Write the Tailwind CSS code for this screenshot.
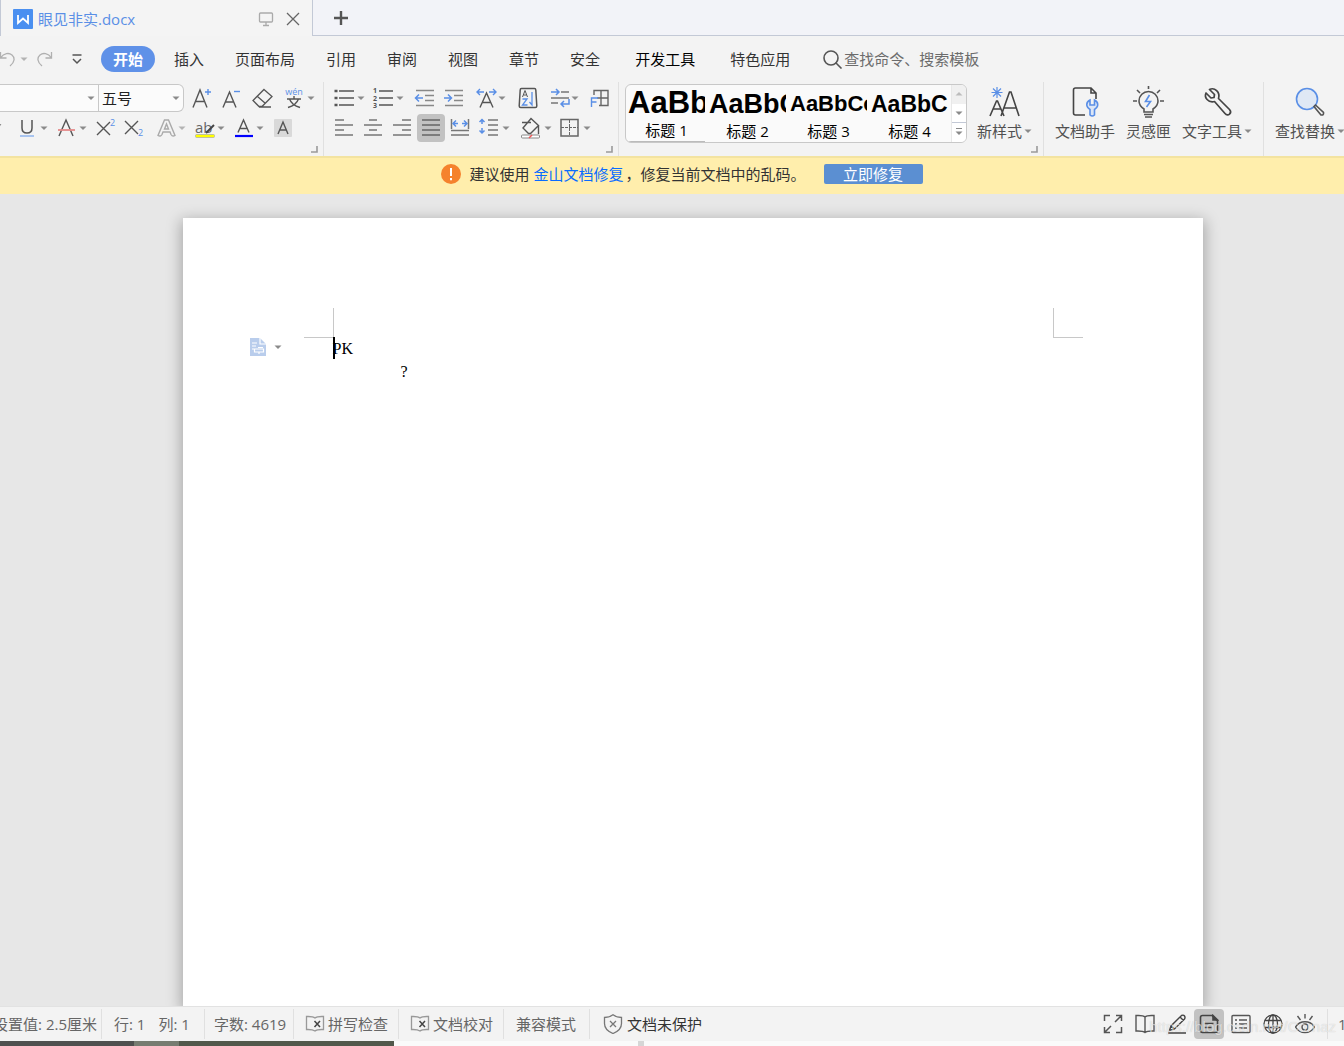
<!DOCTYPE html>
<html lang="zh-CN">
<head>
  <meta charset="UTF-8" />
  <meta name="viewport" content="width=device-width, initial-scale=1.0"/>
  <title>眼见非实.docx</title>
  <script src="https://cdn.jsdelivr.net/npm/@tailwindcss/browser@4"></script>
</head>
<body class="h-screen flex flex-col overflow-hidden bg-[#f3f3f3] font-['Open_Sans','Noto_Sans_CJK_SC',sans-serif] text-[15px] leading-5 text-[#505050]">

  <!-- Shared shapes -->
  <svg class="hidden">
    <symbol id="caret" viewBox="0 0 8 8"><path d="M.5 2.500h7L4 6z" fill="#8a8a8a"/></symbol>
    <symbol id="launcher" viewBox="0 0 8 8"><path d="M7 1v6H1" fill="none" stroke="#9a9a9a" stroke-width="1.6"/></symbol>
    <symbol id="bookx" viewBox="0 0 20 18"><path d="M10 3C8 1.200 5 1.500 1.500 1.500v13c3 0 6-.300 8.500 1.500 2-1.800 5-1.500 8.500-1.500v-13C15 1.500 12 1.200 10 3z" fill="none" stroke="#999" stroke-width="1.300"/><path d="M9.500 6l5.500 6M15 6l-5.500 6" stroke="#444" stroke-width="1.500"/></symbol>
  </svg>

  <!-- Tabs -->
  <div class="flex h-9 shrink-0 bg-[#f2f3f8]">
    <div class="flex w-[313px] items-center border-x border-[#c3c9d6] bg-[#f4f4f4] pl-3 pr-[11px] pt-0.5">
      <svg class="h-5 w-5" viewBox="0 0 20 20"><rect width="20" height="20" rx="1" fill="#4a8ff0"/><path d="M5 6v8l5-4.500 5 4.500V6" fill="none" stroke="#fff" stroke-width="1.800"/></svg>
      <span class="ml-[5px] flex-1 text-[#5a8fe6]">眼见非实.docx</span>
      <svg class="h-4 w-4" viewBox="0 0 16 16" fill="none" stroke="#aaa" stroke-width="1.300"><rect x="1.500" y="2" width="13" height="9" rx="1"/><path d="M8 11v3M5 14.500h6"/></svg>
      <button class="ml-[11px]" aria-label="关闭"><svg class="h-4 w-4" viewBox="0 0 16 16" stroke="#666" stroke-width="1.300"><path d="M2 2l12 12M14 2L2 14"/></svg></button>
    </div>
    <div class="flex flex-1 items-center border-b border-[#c3c9d6] pl-5">
      <button aria-label="新建"><svg class="h-4 w-4" viewBox="0 0 16 16" stroke="#555" stroke-width="2.400"><path d="M8 1v14M1 8h14"/></svg></button>
    </div>
  </div>

  <!-- Menu -->
  <nav class="flex h-[46px] shrink-0 items-center whitespace-nowrap">
    <div class="flex w-[101px] items-center">
      <button class="-ml-px" aria-label="撤销"><svg class="h-4 w-4" viewBox="0 0 16 16" fill="none" stroke="#b0b0b0" stroke-width="1.300"><path d="M1.500 1v6h6M1.500 7C5 2 10 1.500 13 4c3 2.600 3 7-2 11"/></svg></button>
      <svg class="ml-[5px] h-2 w-2 opacity-60"><use href="#caret"/></svg>
      <button class="ml-[9px]" aria-label="恢复"><svg class="h-4 w-4" viewBox="0 0 16 16" fill="none" stroke="#b0b0b0" stroke-width="1.300"><path d="M14.500 1v6h-6M14.500 7C11 2 6 1.500 3 4c-3 2.600-3 7 2 11"/></svg></button>
      <button class="ml-[18px]" aria-label="更多"><svg class="h-3 w-3" viewBox="0 0 12 12" fill="none" stroke="#555" stroke-width="1.500"><path d="M1.500 2h9M2 6l4 4 4-4"/></svg></button>
    </div>
    <div class="flex items-center gap-[31px] text-[#333]">
      <button class="-mr-3 h-[26px] rounded-full bg-[#5f91e8] px-3 font-bold text-white">开始</button>
      <button>插入</button>
      <button>页面布局</button>
      <button>引用</button>
      <button>审阅</button>
      <button>视图</button>
      <button>章节</button>
      <button>安全</button>
      <button class="ml-1 text-black">开发工具</button>
      <button class="ml-1">特色应用</button>
    </div>
    <label class="ml-[33px] flex flex-1 items-center">
      <svg class="h-5 w-5 shrink-0" viewBox="0 0 20 20" fill="none" stroke="#555" stroke-width="1.600"><circle cx="8" cy="9" r="7"/><path d="M12.500 13.500l6 6"/></svg>
      <input type="text" aria-label="搜索" placeholder="查找命令、搜索模板" class="ml-px w-40 outline-none placeholder:text-[#6c6c6c]"/>
    </label>
  </nav>

  <!-- Ribbon -->
  <div class="flex h-[74px] shrink-0 whitespace-nowrap">

    <!-- Font -->
    <div class="relative flex w-[324px] shrink-0 flex-col gap-0.5 border-r border-[#e0e0e0] pt-0.5">
      <div class="flex h-7 items-center gap-[7px]">
        <div class="-mr-px flex h-7 w-[184px] rounded-r-md border border-l-0 border-[#c8c8c8] bg-[#fbfbfb]">
          <div class="flex w-[99px] items-center border-r border-[#c8c8c8] pr-[3px]">
            <input type="text" aria-label="字体" class="min-w-0 flex-1 outline-none"/>
            <svg class="h-2 w-2"><use href="#caret"/></svg>
          </div>
          <div class="relative flex flex-1 items-center">
            <select aria-label="字号" class="w-full appearance-none pl-[3px] text-[#222] outline-none"><option>五号</option></select>
            <svg class="pointer-events-none absolute right-[3px] h-2 w-2"><use href="#caret"/></svg>
          </div>
        </div>
        <button aria-label="增大字号"><svg class="h-6 w-6" viewBox="0 0 24 24" fill="none" stroke="#555" stroke-width="1.400"><path d="M3 21.500L10 4l7 17.500M5.500 15.500h9"/><path d="M18 3v6M15 6h6" stroke="#5a8fe6"/></svg></button>
        <button aria-label="减小字号"><svg class="h-6 w-6" viewBox="0 0 24 24" fill="none" stroke="#555" stroke-width="1.400"><path d="M2 21.500L8.500 6 15 21.500M4.500 16h8"/><path d="M13 5.500h6" stroke="#5a8fe6"/></svg></button>
        <button aria-label="清除格式"><svg class="h-6 w-6" viewBox="0 0 24 24" fill="none" stroke="#555" stroke-width="1.300"><path d="M12 3.500l8 7L10 20.500H7l-6-6zM5.500 10.500l8 7M7 21h12"/></svg></button>
        <button class="flex items-center" aria-label="拼音指南"><svg class="h-6 w-6" viewBox="0 0 24 24" fill="none" stroke="#555" stroke-width="1.400"><text x="11" y="9" text-anchor="middle" font-size="9" fill="#5a8fe6" stroke="none">wén</text><path d="M4 13h14M11 10v3M6.500 13c1.500 4 5 7 10.500 8.500M15.500 13c-1.500 4-5 7-10.500 8.500"/></svg><svg class="h-2 w-2"><use href="#caret"/></svg></button>
      </div>
      <div class="flex h-7 items-center gap-1.5">
        <svg class="-mr-1.5 h-2 w-[15px]" viewBox="0 0 15 8"><path d="M-3 -1h5l-2.500 4z" fill="#8a8a8a"/></svg>
        <button class="flex items-center gap-px" aria-label="下划线"><svg class="h-6 w-6" viewBox="0 0 24 24" fill="none" stroke="#555" stroke-width="1.500"><path d="M7 4v8c0 3 1.500 5 5 5s5-2 5-5V4"/><path d="M5 20h14" stroke="#8fb4ee"/></svg><svg class="h-2 w-2"><use href="#caret"/></svg></button>
        <button class="flex items-center gap-px" aria-label="删除线"><svg class="h-6 w-6" viewBox="0 0 24 24" fill="none" stroke="#555" stroke-width="1.400"><path d="M5 20l7-16 7 16"/><path d="M4 14h17" stroke="#e58a8a" stroke-width="1.800"/></svg><svg class="h-2 w-2"><use href="#caret"/></svg></button>
        <button aria-label="上标"><svg class="h-6 w-6" viewBox="0 0 24 24" stroke="#555" stroke-width="1.400"><path d="M4 6l13 13M17 6L4 19"/><text x="17" y="10" font-size="9" fill="#5a8fe6" stroke="none">2</text></svg></button>
        <button aria-label="下标"><svg class="h-6 w-6" viewBox="0 0 24 24" stroke="#555" stroke-width="1.400"><path d="M2 5l13 13M15 5L2 18"/><text x="15" y="20" font-size="9" fill="#5a8fe6" stroke="none">2</text></svg></button>
        <button class="flex items-center gap-px" aria-label="文字效果"><svg class="h-6 w-6" viewBox="0 0 24 24" fill="none" stroke="#aaa" stroke-width="1.400"><path d="M11.500 4h4L22 19.500q-2.500 1.500-4-1l-1-2.500h-7l-1 2.500q-1.500 2.500-4 1zM11.500 13h4l-2-5z"/></svg><svg class="h-2 w-2 opacity-60"><use href="#caret"/></svg></button>
        <button class="flex items-center gap-px" aria-label="突出显示"><svg class="h-6 w-6" viewBox="0 0 24 24"><text x="3" y="17" font-size="15" fill="#666">ab</text><path d="M14 17l8-8" stroke="#444" stroke-width="2"/><rect x="3.500" y="18.500" width="19" height="3" rx="1" fill="#ff0" stroke="#aaa" stroke-width=".7"/></svg><svg class="h-2 w-2"><use href="#caret"/></svg></button>
        <button class="flex items-center gap-px" aria-label="字体颜色"><svg class="h-6 w-6" viewBox="0 0 24 24" fill="none" stroke="#555" stroke-width="1.400"><path d="M7 16.500L12.500 4 18 16.500M9 12.500h7"/><path d="M4 20h18" stroke="#00f" stroke-width="2.200"/></svg><svg class="h-2 w-2"><use href="#caret"/></svg></button>
        <button aria-label="字符底纹"><svg class="h-6 w-6" viewBox="0 0 24 24" fill="none" stroke="#555" stroke-width="1.400"><rect x="4" y="3" width="18" height="18" rx="1" fill="#d9d9d9" stroke="none"/><path d="M8 18l5-12 5 12M10 14h6"/></svg></button>
      </div>
      <svg class="absolute bottom-[3px] right-[5px] h-2 w-2"><use href="#launcher"/></svg>
    </div>

    <!-- Paragraph -->
    <div class="relative flex w-[295px] shrink-0 flex-col gap-0.5 border-r border-[#e0e0e0] pt-0.5">
      <div class="flex h-7 items-center gap-2 pl-2">
        <div class="flex gap-1.5">
          <button class="flex items-center gap-px" aria-label="项目符号"><svg class="h-6 w-6" viewBox="0 0 24 24" stroke="#555" stroke-width="1.500"><path d="M7 5h15M7 12h15M7 19h15"/><path d="M2.500 5h3M2.500 12h3M2.500 19h3" stroke-width="2.500"/></svg><svg class="h-2 w-2"><use href="#caret"/></svg></button>
          <button class="flex items-center gap-px" aria-label="编号"><svg class="h-6 w-6" viewBox="0 0 24 24" stroke="#555" stroke-width="1.500"><path d="M8 5h14M8 12h14M8 19h14"/><g font-size="7" font-weight="700" fill="#555" stroke="none"><text x="2" y="7">1</text><text x="2" y="14.500">2</text><text x="2" y="22">3</text></g></svg><svg class="h-2 w-2"><use href="#caret"/></svg></button>
        </div>
        <div class="flex gap-[5px]">
          <button aria-label="减少缩进"><svg class="h-6 w-6" viewBox="0 0 24 24" fill="none" stroke="#888" stroke-width="1.500"><path d="M4 4.500h18M13 9.500h9M13 14.500h9M4 19.500h18"/><path d="M11 12H4M7 8.500L3.500 12 7 15.500" stroke="#5a8fe6"/></svg></button>
          <button aria-label="增加缩进"><svg class="h-6 w-6" viewBox="0 0 24 24" fill="none" stroke="#888" stroke-width="1.500"><path d="M4 4.500h18M13 9.500h9M13 14.500h9M4 19.500h18"/><path d="M3 12h7M7 8.500l3.500 3.500L7 15.500" stroke="#5a8fe6"/></svg></button>
        </div>
        <button class="flex items-center gap-px" aria-label="字符缩放"><svg class="h-6 w-6" viewBox="0 0 24 24" fill="none" stroke="#555" stroke-width="1.400"><path d="M7 21.500L13.500 7 20 21.500M9.500 16.500h8"/><path d="M11 6H4M7 3L4 6l3 3M16 6h7M20 3l3 3-3 3" stroke="#5a8fe6"/></svg><svg class="h-2 w-2"><use href="#caret"/></svg></button>
        <button aria-label="排序"><svg class="h-6 w-6" viewBox="0 0 24 24" fill="none" stroke="#555" stroke-width="1.500"><path d="M7.500 2.500h13q1.200 0 1.300 1.500l1 16q0 1.500-1.500 1.500H6.700q-1.500 0-1.500-1.500l1-16q0-1.500 1.300-1.500z"/><path d="M8.500 11L11 4.500 13.500 11M9.500 9h3" stroke-width="1"/><path d="M8.500 13H13l-4.500 6h5M18 6v13l-2.500-3" stroke="#5a8fe6" stroke-width="1.300"/></svg></button>
        <button class="flex items-center gap-px" aria-label="换行"><svg class="h-6 w-6" viewBox="0 0 24 24" fill="none" stroke="#777" stroke-width="1.500"><path d="M15 6h8M5 12h18M5 17h7"/><path d="M5 6h8M10 3l3 3-3 3M23 13v5h-8M18 15l-3 3 3 3" stroke="#5a8fe6"/></svg><svg class="h-2 w-2"><use href="#caret"/></svg></button>
        <button aria-label="制表位"><svg class="h-6 w-6" viewBox="0 0 24 24" fill="none" stroke="#666" stroke-width="1.400"><path d="M7 9V4.500h14v15h-9M14 4.500v15M10 12h11"/><path d="M4.500 21v-9H11M4.500 16h5" stroke="#5a8fe6"/></svg></button>
      </div>
      <div class="flex h-7 items-center gap-[9px] pl-1.5">
        <div class="flex gap-px">
          <button class="flex h-7 w-7 items-center justify-center" aria-label="左对齐"><svg class="h-6 w-6" viewBox="0 0 24 24" stroke="#777" stroke-width="1.500"><path d="M3 4h9M3 9h18M3 14h9M3 19h18"/></svg></button>
          <button class="flex h-7 w-7 items-center justify-center" aria-label="居中"><svg class="h-6 w-6" viewBox="0 0 24 24" stroke="#777" stroke-width="1.500"><path d="M8 4h8M3 9h18M8 14h8M3 19h18"/></svg></button>
          <button class="flex h-7 w-7 items-center justify-center" aria-label="右对齐"><svg class="h-6 w-6" viewBox="0 0 24 24" stroke="#777" stroke-width="1.500"><path d="M12 4h9M3 9h18M12 14h9M3 19h18"/></svg></button>
          <button class="flex h-7 w-7 items-center justify-center rounded bg-[#c2c2c2]" aria-label="两端对齐"><svg class="h-6 w-6" viewBox="0 0 24 24" stroke="#666" stroke-width="1.500"><path d="M3 4h18M3 9h18M3 14h18M3 19h18"/></svg></button>
          <button class="flex h-7 w-7 items-center justify-center" aria-label="分散对齐"><svg class="h-6 w-6" viewBox="0 0 24 24" fill="none" stroke="#777" stroke-width="1.500"><path d="M3.500 3v10M20.500 3v10M3 14.500h18M3 19h18"/><path d="M10 7.500H5M8 4.500l-3 3 3 3M14 7.500h5M16 4.500l3 3-3 3" stroke="#5a8fe6"/></svg></button>
        </div>
        <button class="-ml-1.5 flex items-center gap-px" aria-label="行距"><svg class="h-6 w-6" viewBox="0 0 24 24" fill="none" stroke="#777" stroke-width="1.500"><path d="M11 4h10M11 9h10M11 14h10M11 19h10"/><path d="M5 8V3.500M2.500 6L5 3.500 7.500 6M5 12v5M2.500 14.500L5 17l2.500-2.500" stroke="#5a8fe6"/></svg><svg class="h-2 w-2"><use href="#caret"/></svg></button>
        <div class="flex gap-1.5">
          <button class="flex items-center gap-px" aria-label="底纹颜色"><svg class="h-6 w-6" viewBox="0 0 24 24" fill="none" stroke="#555" stroke-width="1.400"><path d="M12 2.500l7.500 7-8 8h-2l-5.500-5.500zM3 6.500h9M19.500 9v9"/><rect x="2.500" y="19" width="18" height="3" rx="1" fill="#fff" stroke="#888" stroke-width="1"/><path d="M10 22l3-3" stroke="#e55"/></svg><svg class="h-2 w-2"><use href="#caret"/></svg></button>
          <button class="flex items-center gap-px" aria-label="边框"><svg class="h-6 w-6" viewBox="0 0 24 24" fill="none" stroke="#666" stroke-width="1.500"><rect x="3" y="3.500" width="17" height="16.500"/><path d="M11.500 4v16M3 11.500h17" stroke-width="1" stroke-dasharray="3 1"/></svg><svg class="h-2 w-2"><use href="#caret"/></svg></button>
        </div>
      </div>
      <svg class="absolute bottom-[3px] right-[5px] h-2 w-2"><use href="#launcher"/></svg>
    </div>

    <!-- Styles -->
    <div class="relative flex w-[425px] shrink-0 border-r border-[#e0e0e0] pl-1.5 pt-0.5">
      <div class="flex h-[59px] w-[342px] overflow-hidden rounded-md border border-[#c8c8c8] bg-[#fafafa] text-black">
        <div class="flex flex-1 gap-1 pl-0.5">
          <button class="w-[77px] overflow-hidden border-b border-[#bbb] text-left"><span class="flex h-[34px] items-center font-['Liberation_Sans'] text-[31px] font-bold">AaBb</span><span class="block text-center">标题 1</span></button>
          <button class="w-[77px] overflow-hidden text-left"><span class="flex h-[34px] items-center font-['Liberation_Sans'] text-[27px] font-bold">AaBbC</span><span class="block text-center">标题 2</span></button>
          <button class="w-[77px] overflow-hidden text-left"><span class="flex h-[34px] items-center font-['Liberation_Sans'] text-[22px] font-bold">AaBbCc</span><span class="block text-center">标题 3</span></button>
          <button class="w-[77px] overflow-hidden text-left"><span class="flex h-[34px] items-center font-['Liberation_Sans'] text-[23px] font-bold">AaBbC</span><span class="block text-center">标题 4</span></button>
        </div>
        <div class="flex w-[15px] flex-col border-l border-[#e8e8e8]">
          <button class="flex flex-1 items-center justify-center bg-[#f0f0f0]" aria-label="上一行"><svg class="h-2 w-2 rotate-180 opacity-50"><use href="#caret"/></svg></button>
          <button class="flex flex-1 items-center justify-center bg-white" aria-label="下一行"><svg class="h-2 w-2"><use href="#caret"/></svg></button>
          <button class="flex flex-1 flex-col items-center justify-center border-t border-[#c3c9d6] bg-white" aria-label="全部样式"><span class="h-px w-1.5 bg-[#888]"></span><svg class="h-2 w-2"><use href="#caret"/></svg></button>
        </div>
      </div>
      <button class="ml-2.5 flex flex-col items-center">
        <svg class="mt-0.5 h-8 w-8" viewBox="0 0 32 32" fill="none" stroke="#444" stroke-width="1.600"><path d="M1 30l6.500-15h1L15 30M3.500 23h9M12 30l8.500-24h1.500L30 30M14.500 22h13"/><path d="M8 1v11M2.500 6.500h11M4 2.500l8 8M12 2.500l-8 8" stroke="#5a8fe6" stroke-width="1.200"/></svg>
        <span class="mt-[3px] flex items-center gap-0.5">新样式 <svg class="h-2 w-2"><use href="#caret"/></svg></span>
      </button>
      <svg class="absolute bottom-[3px] right-[5px] h-2 w-2"><use href="#launcher"/></svg>
    </div>

    <!-- Tools -->
    <div class="flex w-[220px] shrink-0 gap-[11px] border-r border-[#e0e0e0] pl-[11px] pt-0.5">
      <button class="flex flex-col items-center">
        <svg class="mt-0.5 h-8 w-8" viewBox="0 0 32 32" fill="none" stroke="#444" stroke-width="1.600"><path d="M16 29H6.500Q4.500 29 4.500 27V4q0-2 2-2H22l5 5v6M22 2v5h5"/><path d="M21 14v5h4.500v-5q4 2 3 6-.5 2-3 3.500V29q-2.300 2-4.500 0v-5.500q-2.500-1.500-3-3.500-1-4 3-6z" fill="#dce6f6" stroke="#5a8fe6"/></svg>
        <span class="mt-[3px]">文档助手</span>
      </button>
      <button class="flex flex-col items-center">
        <svg class="mt-0.5 h-8 w-8" viewBox="0 0 32 32" fill="none" stroke="#555" stroke-width="1.600"><path d="M11 26v-3c-3-2-5-4.500-5-8a9.500 9.500 0 0 1 19 0c0 3.500-2 6-5 8v3zM11 28.500h9M12 31h7M15.500 0v3M0 15h4M27 15h4M4 4l3 3M27 4l-3 3"/><path d="M16.500 9l-4 6.500h5L13.500 21" stroke="#5a8fe6"/></svg>
        <span class="mt-[3px]">灵感匣</span>
      </button>
      <button class="flex flex-col items-center">
        <svg class="mt-0.5 h-8 w-8" viewBox="0 0 32 32" fill="none" stroke="#444" stroke-width="1.700" stroke-linejoin="round"><path d="M8.500 3.500l5 5-.5 3-3 .5-5-5c-2 4.500 2 10 8.500 8.500l10.500 12c3 3.500 7.500-.5 4.500-4L17.500 12.500C19.500 6 13.500 1 8.500 3.500z"/></svg>
        <span class="mt-[3px] flex items-center gap-0.5">文字工具 <svg class="h-2 w-2"><use href="#caret"/></svg></span>
      </button>
    </div>

    <!-- Find -->
    <div class="flex min-w-0 flex-1 pl-[11px] pt-0.5">
      <button class="flex shrink-0 flex-col items-center">
        <svg class="mt-0.5 h-8 w-8" viewBox="0 0 32 32" fill="none" stroke-width="1.600"><circle cx="13" cy="13" r="10.500" fill="#dfe8f5" stroke="#5a8fe6"/><path d="M20 20.500l1.500-1.500 8 7.500q.5 3-2.500 2.500z" stroke="#555"/></svg>
        <span class="mt-[3px] flex items-center gap-0.5">查找替换 <svg class="h-2 w-2"><use href="#caret"/></svg></span>
      </button>
    </div>
  </div>

  <!-- Repair notice -->
  <div class="flex h-[38px] shrink-0 items-center justify-center border-t-2 border-[#f3e3a0] bg-[#ffeeac] pb-1 pl-5 text-[#333]">
    <svg class="h-5 w-5" viewBox="0 0 20 20"><circle cx="10" cy="10" r="10" fill="#f5822d"/><path d="M10 4v8M10 14v2.200" stroke="#fff" stroke-width="2"/></svg>
    <span class="ml-2">建议使用</span>
    <a href="#" class="ml-1 text-[#0a6cff]">金山文档修复</a>
    <span class="ml-0.5">，修复当前文档中的乱码。</span>
    <button class="ml-[18px] h-5 w-[99px] rounded-xs bg-[#5b8fd2] text-white">立即修复</button>
  </div>

  <!-- Document -->
  <main class="flex min-h-0 flex-1 justify-center overflow-hidden bg-[#e7e7e7] pl-[41px] pt-6">
    <div class="relative h-full w-[1020px] bg-white pl-[150px] pt-[119px] font-['Liberation_Serif',serif] text-base text-black shadow-[0_4px_14px_2px_rgba(0,0,0,0.28)]">
      <div class="absolute left-[121px] top-[90px] h-[30px] w-[30px] border-b border-r border-[#c8c8c8]"></div>
      <div class="absolute right-[120px] top-[90px] h-[30px] w-[30px] border-b border-l border-[#c8c8c8]"></div>
      <button class="absolute left-[67px] top-[120px] flex items-center gap-2" aria-label="段落布局">
        <svg class="h-[18px] w-4" viewBox="0 0 16 18"><path d="M0 0h10l6 6v12H0z" fill="#b9cdec"/><path d="M10 0v6h6M2 5h5M2 8h4M2 11h3M4.500 11h9v3h-9zM8 9.500h5M9 14v2" fill="none" stroke="#fff" stroke-width="1.200"/></svg>
        <svg class="h-2 w-2"><use href="#caret"/></svg>
      </button>
      <p class="relative leading-[23px]"><span class="absolute left-0 top-0 h-[22px] w-0.5 bg-black"></span>PK</p>
      <p class="pl-[68px] leading-[23px]">?</p>
    </div>
  </main>

  <!-- Status bar -->
  <footer class="relative flex h-[35px] shrink-0 items-center whitespace-nowrap border-t border-[#e2e2e2] text-[#666]">
    <div class="flex h-[30px] w-[102px] items-center justify-end overflow-hidden border-r border-[#e0e0e0] pr-1"><span>设置值: 2.5厘米</span></div>
    <div class="flex h-[30px] w-[103px] items-center gap-[13px] border-r border-[#e0e0e0] pl-3"><span>行: 1</span><span>列: 1</span></div>
    <div class="flex h-[30px] w-[89px] items-center border-r border-[#e0e0e0] pl-[9px]">字数: 4619</div>
    <button class="flex h-[30px] w-[105px] items-center gap-[3px] border-r border-[#e0e0e0] pl-[11px]"><svg class="h-[18px] w-5"><use href="#bookx"/></svg>拼写检查</button>
    <button class="flex h-[30px] w-[105px] items-center gap-[3px] border-r border-[#e0e0e0] pl-[11px]"><svg class="h-[18px] w-5"><use href="#bookx"/></svg>文档校对</button>
    <div class="flex h-[30px] w-[86px] items-center border-r border-[#e0e0e0] pl-3">兼容模式</div>
    <button class="flex flex-1 items-center gap-1 pl-[13px] text-[#333]"><svg class="h-5 w-5" viewBox="0 0 20 20" fill="none" stroke="#777" stroke-width="1.300"><path d="M10 .8c2.500 2 5 2.700 8.500 2.700v6c0 5-3.500 8-8.500 10-5-2-8.500-5-8.500-10v-6C5 3.500 7.500 2.800 10 .8z"/><path d="M7 7l6 6M13 7l-6 6"/></svg>文档未保护</button>

    <div class="flex h-[30px] items-center gap-0.5 border-r border-[#e0e0e0] pr-[7px]">
      <button class="flex h-[30px] w-[30px] items-center justify-center" aria-label="全屏"><svg class="h-5 w-5" viewBox="0 0 20 20" fill="none" stroke="#555" stroke-width="1.500"><path d="M1.500 7V1.500H7M13 1.500h5.500V7M18.500 13v5.500H13M7 18.500H1.500V13M12 8l6-6M8 12l-6 6"/></svg></button>
      <button class="flex h-[30px] w-[30px] items-center justify-center" aria-label="阅读版式"><svg class="h-5 w-5" viewBox="0 0 20 20" fill="none" stroke="#555" stroke-width="1.400"><path d="M10 3C8 1 5 1.500 1 1.500V17c3.500 0 7-.3 9 1.500 2-1.800 5.500-1.500 9-1.500V1.500C15 1.500 12 1 10 3zM10 3v15"/></svg></button>
      <button class="flex h-[30px] w-[30px] items-center justify-center" aria-label="写作模式"><svg class="h-5 w-5" viewBox="0 0 20 20" fill="none" stroke="#444" stroke-width="1.400"><path d="M2.500 16.500L4 12 14.500 1.500q2-1 3 .5t0 3L7.500 15zM4 12l3.500 3M13 3l3.500 3.500M1 19h18"/></svg></button>
      <button class="flex h-[30px] w-[30px] items-center justify-center rounded bg-[#c2c2c2]" aria-label="页面视图"><svg class="h-5 w-5" viewBox="0 0 20 20" fill="none" stroke="#444" stroke-width="1.600"><path d="M13 1.500H3.500q-2 0-2 2v13q0 2 2 2h13q2 0 2-2V7zM5.500 9.500h9M5.500 13.500h7"/><path d="M14 1.500V6h4.500z" fill="#444"/></svg></button>
      <button class="flex h-[30px] w-[30px] items-center justify-center" aria-label="大纲"><svg class="h-5 w-5" viewBox="0 0 20 20" fill="none" stroke="#555" stroke-width="1.400"><rect x="1" y="1.500" width="18" height="17" rx="1"/><path d="M4 6h2M8 6h8M4 10h2M8 10h8M4 14h2M8 14h8"/></svg></button>
      <button class="flex h-[30px] w-[30px] items-center justify-center" aria-label="Web版式"><svg class="h-5 w-5" viewBox="0 0 20 20" fill="none" stroke="#444" stroke-width="1.300"><circle cx="10" cy="10" r="9"/><ellipse cx="10" cy="10" rx="4.500" ry="9"/><path d="M10 1v18M2 6.500h16M2 13.500h16"/></svg></button>
      <button class="flex h-[30px] w-[30px] items-center justify-center" aria-label="护眼模式"><svg class="h-5 w-5" viewBox="0 0 20 20" fill="none" stroke="#555" stroke-width="1.400"><path d="M.5 13C5 6 15 6 19.500 13 15 20.500 5 20.500 .5 13zM10 0v4.500M2.500 2l3 4M17.500 2l-3 4"/><circle cx="10" cy="13" r="3"/></svg></button>
    </div>
    <div class="w-4 overflow-hidden pl-2.5">100%</div>
    <span class="pointer-events-none absolute right-2 top-2.5 font-['Liberation_Sans'] text-[15px] text-white/60 [text-shadow:0_0_1px_rgba(0,0,0,0.2)]">https://blog.csdn.net/Cornaz</span>
  </footer>

  <!-- Desktop edge -->
  <div class="flex h-[5px] shrink-0 bg-[#fafafa]">
    <div class="w-[134px] bg-[#4f504f]"></div>
    <div class="w-[45px] bg-[#777c71]"></div>
    <div class="w-[215px] bg-[#52584b]"></div>
    <div class="ml-[244px] w-1.5 bg-[#d6d6d6]"></div>
  </div>

</body>
</html>
